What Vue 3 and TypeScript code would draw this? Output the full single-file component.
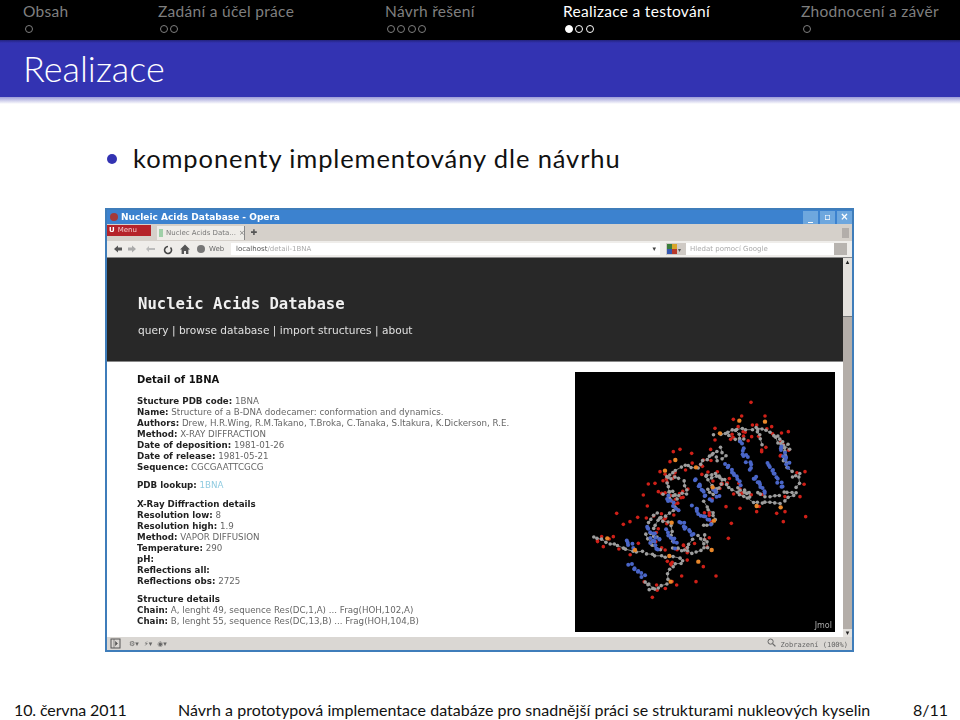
<script setup lang="ts">
const sections = [
  { name: 'Obsah', dots: 1, filled: -1, active: false },
  { name: 'Zadání a účel práce', dots: 2, filled: -1, active: false },
  { name: 'Návrh řešení', dots: 4, filled: -1, active: false },
  { name: 'Realizace a testování', dots: 3, filled: 0, active: true },
  { name: 'Zhodnocení a závěr', dots: 1, filled: -1, active: false }
]

type Row = { b: string; t?: string }
const group1: Row[] = [
  { b: 'Stucture PDB code:', t: ' 1BNA' },
  { b: 'Name:', t: ' Structure of a B-DNA dodecamer: conformation and dynamics.' },
  { b: 'Authors:', t: ' Drew, H.R.Wing, R.M.Takano, T.Broka, C.Tanaka, S.Itakura, K.Dickerson, R.E.' },
  { b: 'Method:', t: ' X-RAY DIFFRACTION' },
  { b: 'Date of deposition:', t: ' 1981-01-26' },
  { b: 'Date of release:', t: ' 1981-05-21' },
  { b: 'Sequence:', t: ' CGCGAATTCGCG' }
]
const group2: Row[] = [
  { b: 'X-Ray Diffraction details' },
  { b: 'Resolution low:', t: ' 8' },
  { b: 'Resolution high:', t: ' 1.9' },
  { b: 'Method:', t: ' VAPOR DIFFUSION' },
  { b: 'Temperature:', t: ' 290' },
  { b: 'pH:' },
  { b: 'Reflections all:' },
  { b: 'Reflections obs:', t: ' 2725' }
]
const group3: Row[] = [
  { b: 'Structure details' },
  { b: 'Chain:', t: ' A, lenght 49, sequence Res(DC,1,A) ... Frag(HOH,102,A)' },
  { b: 'Chain:', t: ' B, lenght 55, sequence Res(DC,13,B) ... Frag(HOH,104,B)' }
]

// Molecule: coordinates are read from the 3x crop, mapped to the 260x260 canvas.
let seed = 41
const rnd = () => {
  seed = (seed * 16807) % 2147483647
  return seed / 2147483647
}
const mx = (x: number) => x / 3 - 5
const my = (y: number) => y / 3 + 8

type P = [number, number]
const chains: P[][] = [
  [[435,165],[450,160],[500,150],[560,145],[620,170],[650,190],[640,240],[670,290],[690,280],[680,340],[630,370],[560,370],[500,340],[450,290],[410,290]],
  [[430,220],[380,260],[330,260],[290,290],[300,350],[320,390],[270,410],[300,440],[310,500],[380,520],[410,500],[400,450]],
  [[70,470],[120,490],[170,510],[230,520],[300,530],[340,540],[300,570],[290,610],[250,625],[230,605]],
  [[500,150],[510,190]],[[620,170],[630,200]],[[410,290],[450,350]],[[260,400],[230,440]],
  [[290,290],[340,300],[350,340],[300,350]],
  [[410,290],[440,280],[460,300],[430,340],[400,320]],
  [[270,410],[240,460],[270,480]],
  [[500,320],[540,350],[520,320]],
  [[560,340],[600,350],[640,340],[680,340]],
  [[640,240],[655,210],[625,180]],
  [[340,510],[380,470],[410,500]],
  [[400,440],[440,420],[410,380],[400,350]],
  [[430,220],[450,205],[465,225],[445,240],[430,220]],
  [[560,145],[575,180],[570,210]],
  [[480,170],[505,185],[530,170]],
  [[230,605],[240,630],[265,622]],
  [[280,340],[310,330],[330,370]],
  [[230,460],[250,500],[280,520]]
]
const rungs: [number, number, number, number][] = [
  [510,190,545,270],[630,200,660,260],[470,250,510,310],[590,250,640,320],[550,290,590,340],
  [375,300,420,360],[430,330,450,350],[290,350,320,390],[370,380,420,430],[230,440,270,480],
  [330,420,370,470],[290,450,320,500],[180,550,220,590],[170,480,190,500],[240,470,260,510]
]
const phos: P[] = [[508,122],[585,125],[450,160],[316,240],[378,262],[285,272],[428,322],[560,378],[632,382],[305,428],[432,422],[112,475],[195,510],[298,528],[385,545],[425,510],[302,605]]
const waters: P[] = [[543,67],[435,145],[330,208],[235,312],[255,310],[220,345],[232,378],[140,400],[203,412],[180,425],[160,433],[484,430],[475,475],[468,380],[510,385],[640,425],[707,410],[705,275],[378,605],[335,588],[438,588],[247,652],[585,108],[655,155],[690,350],[575,210],[515,108],[490,118],[605,140],[435,180],[365,220],[400,240],[270,275],[310,215],[300,245],[560,395],[620,400],[645,395],[575,215],[545,170],[100,500],[95,470],[130,470],[205,490],[400,560],[320,615],[275,340],[265,335]]

const gray: P[] = []
const red: P[] = waters.map((p) => [mx(p[0]), my(p[1])])
const bonds: [P, P][] = []
for (const c of chains) {
  for (let i = 0; i + 1 < c.length; i++) {
    const [a, b] = [c[i], c[i + 1]]
    const n = Math.max(1, Math.round(Math.hypot(b[0] - a[0], b[1] - a[1]) / 14))
    let prev: P | null = null
    for (let k = 0; k < n; k++) {
      const x = a[0] + ((b[0] - a[0]) * k) / n + (rnd() - 0.5) * 9
      const y = a[1] + ((b[1] - a[1]) * k) / n + (rnd() - 0.5) * 9
      const pt: P = [mx(x), my(y)]
      gray.push(pt)
      if (prev) bonds.push([prev, pt])
      prev = pt
      if (rnd() < 0.42) {
        const s = rnd() * 6.28
        red.push([mx(x + Math.cos(s) * 14), my(y + Math.sin(s) * 14)])
      }
    }
  }
}
const blue: P[] = []
for (const r of rungs) {
  const n = Math.max(3, Math.round(Math.hypot(r[2] - r[0], r[3] - r[1]) / 7))
  for (let k = 0; k <= n; k++) {
    const t = k / n
    blue.push([mx(r[0] + (r[2] - r[0]) * t + (rnd() - 0.5) * 12), my(r[1] + (r[3] - r[1]) * t + (rnd() - 0.5) * 12)])
  }
}
const orange: P[] = phos.map((p) => [mx(p[0]), my(p[1])])
</script>

<template>
  <div class="slide">
    <nav class="nav">
      <div v-for="s in sections" :key="s.name" class="sec" :class="{ active: s.active }">
        <div class="sec-name">{{ s.name }}</div>
        <div class="dots">
          <span v-for="n in s.dots" :key="n" class="dot" :class="{ full: n - 1 === s.filled }"></span>
        </div>
      </div>
    </nav>
    <header class="title"><h1>Realizace</h1></header>
    <div class="fade"></div>

    <main class="body">
      <div class="bullet-row">
        <span class="bullet"></span>
        <span class="bullet-text">komponenty implementovány dle návrhu</span>
      </div>

      <div class="win">
        <div class="win-title">
          <span class="opera-dot"></span>
          <span class="win-name">Nucleic Acids Database - Opera</span>
          <span class="win-btns">
            <span class="wb">_</span><span class="wb">▫</span><span class="wb">×</span>
          </span>
        </div>
        <div class="tabs">
          <span class="menu"><b>U</b>Menu</span>
          <span class="tab"><i class="fav"></i>Nuclec Acids Data... <em>×</em></span>
          <span class="newtab">✚</span>
          <span class="tab-end"></span>
        </div>
        <div class="toolbar">
          <span class="tb">
            <svg width="62" height="12" viewBox="0 0 62 12">
              <path d="M1 6l4-3.5v2h4v3H5v2z" fill="#555" />
              <path d="M23 6l-4-3.5v2h-4v3h4v2z" fill="#aaa" />
              <path d="M33 6l3-3v2h6v2h-6v2z" fill="#bbb" />
              <path d="M55 3.5a3.5 3.5 0 1 0 2.5 1" fill="none" stroke="#444" stroke-width="1.6" />
            </svg>
          </span>
          <svg class="home" width="12" height="12" viewBox="0 0 12 12">
            <path d="M6 1.5L1 6.5h1.6V11h2.4V8h2v3h2.4V6.5H11z" fill="#555" />
          </svg>
          <span class="globe"></span>
          <span class="web">Web</span>
          <span class="addr"><b>localhost</b>/detail-1BNA<i class="drop">▾</i></span>
          <span class="gbtn"><svg width="12" height="12" viewBox="0 0 12 12"><rect x="1" y="1" width="5" height="5" fill="#3b7d3b" /><rect x="6" y="1" width="5" height="5" fill="#d8a52a" /><rect x="1" y="6" width="5" height="5" fill="#3557b0" /><rect x="6" y="6" width="5" height="5" fill="#b8392b" /></svg><i>▾</i></span>
          <span class="search">Hledat pomocí Google</span>
          <span class="sbtn"></span>
        </div>

        <div class="view">
          <div class="page">
            <div class="dark">
              <div class="brand">Nucleic Acids Database</div>
              <div class="links">query | browse database | import structures | about</div>
            </div>
            <div class="detail">
              <div class="info">
                <h2>Detail of 1BNA</h2>
                <div class="group">
                  <div v-for="r in group1" :key="r.b"><b>{{ r.b }}</b>{{ r.t }}</div>
                </div>
                <div class="group"><b>PDB lookup:</b> <span class="link">1BNA</span></div>
                <div class="group">
                  <div v-for="r in group2" :key="r.b"><b>{{ r.b }}</b>{{ r.t }}</div>
                </div>
                <div class="group">
                  <div v-for="r in group3" :key="r.b + r.t"><b>{{ r.b }}</b>{{ r.t }}</div>
                </div>
              </div>
              <div class="jmol">
                <svg class="mol" width="260" height="260" viewBox="0 0 260 260">
                  <line v-for="(l, i) in bonds" :key="i" :x1="l[0][0]" :y1="l[0][1]" :x2="l[1][0]" :y2="l[1][1]" stroke="#8f8f8f" stroke-width="0.9" />
                  <circle v-for="(p, i) in red" :key="'r' + i" :cx="p[0]" :cy="p[1]" r="1.8" fill="#cf2018" />
                  <circle v-for="(p, i) in gray" :key="'g' + i" :cx="p[0]" :cy="p[1]" r="1.8" fill="#9e9e9e" />
                  <circle v-for="(p, i) in blue" :key="'b' + i" :cx="p[0]" :cy="p[1]" r="2" fill="#4a66c8" />
                  <circle v-for="(p, i) in orange" :key="'o' + i" :cx="p[0]" :cy="p[1]" r="2.2" fill="#e8872a" />
                </svg>
                <span class="jm">Jmol</span>
              </div>
            </div>
          </div>
          <div class="scroll">
            <span class="arrow">▴</span>
            <span class="thumb"></span>
            <span class="track"></span>
            <span class="arrow low">▾</span>
          </div>
        </div>

        <div class="status">
          <svg width="11" height="11" viewBox="0 0 11 11" class="panel"><rect x="1" y="1" width="9" height="9" fill="none" stroke="#555" /><path d="M4 1v9M5.5 3.5l2 2-2 2z" fill="#555" stroke="#555" stroke-width=".6" /></svg>
          <span class="st-ic">⚙▾</span><span class="st-ic">⚡▾</span><span class="st-ic">◉▾</span>
          <span class="zoom">
            <svg width="9" height="9" viewBox="0 0 9 9"><circle cx="3.6" cy="3.6" r="2.6" fill="none" stroke="#666" /><path d="M5.6 5.6L8.4 8.4" stroke="#666" stroke-width="1.3" /></svg>
            Zobrazení (100%)
          </span>
        </div>
      </div>
    </main>

    <footer class="foot">
      <span class="f-date">10. června 2011</span>
      <span class="f-title">Návrh a prototypová implementace databáze pro snadnější práci se strukturami nukleových kyselin</span>
      <span class="f-page">8/11</span>
    </footer>
  </div>
</template>

<style>
html, body { margin: 0; background: #fff; }
</style>

<style scoped>
.slide {
  width: 960px;
  height: 720px;
  display: flex;
  flex-direction: column;
  overflow: hidden;
  background: #fff;
  font-family: "Lato", "Open Sans", sans-serif;
}
.nav {
  height: 40px;
  background: #000;
  display: grid;
  grid-template-columns: 135px 227px 178px 238px 1fr;
  padding-left: 23px;
  box-sizing: border-box;
  color: #7f7f7f;
}
.sec-name {
  font-size: 15.5px;
  line-height: 16px;
  padding-top: 3px;
  letter-spacing: 0.3px;
  white-space: nowrap;
}
.sec.active { color: #fff; }
.dots { display: flex; margin-top: 6px; margin-left: 2px; }
.dot {
  width: 8px;
  height: 8px;
  box-sizing: border-box;
  border: 1px solid currentColor;
  border-radius: 50%;
  margin-right: 2.3px;
}
.dot.full { background: currentColor; }
.title {
  height: 57px;
  background: #3333b2;
  background-image: linear-gradient(#23237e 0, #3333b2 3px);
  display: flex;
  align-items: center;
  padding-left: 23px;
}
h1 {
  margin: 0;
  font-size: 36px;
  font-weight: 300;
  color: #fff;
  line-height: 57px;
}
.fade { height: 7px; background: linear-gradient(#9c9cd8, #fff); }
.body { flex: 1; display: flex; flex-direction: column; padding-left: 105px; }
.bullet-row { display: flex; align-items: center; height: 30px; margin-top: 40px; }
.bullet {
  width: 10px;
  height: 10px;
  border-radius: 50%;
  background: #3333b2;
  margin-left: 2px;
  margin-right: 16px;
}
.bullet-text {
  font-size: 25.5px;
  letter-spacing: 0.9px;
  color: #111;
  white-space: nowrap;
  padding-bottom: 3px;
}
.win {
  margin-top: 34px;
  width: 749px;
  height: 444px;
  box-sizing: border-box;
  border: 2px solid #3f7dba;
  display: flex;
  flex-direction: column;
  font-family: "DejaVu Sans", sans-serif;
  filter: blur(0.6px);
}
.win-title {
  height: 14px;
  flex: none;
  background: #3c82cf;
  display: flex;
  align-items: center;
  color: #fff;
  font-size: 9px;
  font-weight: 700;
  padding-left: 3px;
}
.opera-dot { width: 8px; height: 8px; border-radius: 50%; background: #a53a3a; margin-right: 3px; }
.win-btns { margin-left: auto; display: flex; }
.wb {
  width: 15px;
  height: 13px;
  margin-left: 2px;
  background: #6ea7de;
  color: #fff;
  text-align: center;
  font-size: 10px;
  line-height: 12px;
}
.tabs {
  height: 17px;
  flex: none;
  background: #d5d0ca;
  display: flex;
  align-items: center;
  font-size: 7px;
  color: #777;
}
.menu {
  width: 44px;
  height: 11px;
  background: #b5232a;
  color: #f3caca;
  font-size: 7px;
  line-height: 11px;
  margin-top: -4px;
  box-sizing: border-box;
  padding-left: 2px;
}
.menu b { color: #fff; margin-right: 3px; }
.tab {
  margin-left: 6px;
  width: 88px;
  height: 14px;
  box-sizing: border-box;
  padding-left: 2px;
  display: flex;
  align-items: center;
  background: #eeece8;
  border-right: 1px solid #888;
  white-space: nowrap;
}
.tab em { font-style: normal; margin-left: 3px; }
.fav { width: 4px; height: 8px; background: #9fd0a8; margin-right: 3px; flex: none; }
.newtab { width: 18px; text-align: center; color: #555; font-size: 8px; }
.tab-end { flex: 1; }
.tabs::after {
  content: "";
  width: 7px;
  height: 10px;
  background: #b3aeaa;
  margin-right: 3px;
}
.toolbar {
  height: 17px;
  flex: none;
  box-sizing: border-box;
  background: #efedea;
  border-bottom: 1px solid #888;
  display: flex;
  align-items: center;
  font-size: 7px;
  color: #888;
  padding-left: 6px;
}
.tb { display: flex; }
.home { margin-left: 4px; }
.globe { width: 8px; height: 8px; background: #777; border-radius: 50%; margin-left: 6px; }
.web { margin-left: 4px; width: 22px; color: #666; }
.addr {
  width: 246px;
  flex: none;
  height: 12px;
  background: #fff;
  box-sizing: border-box;
  padding-left: 5px;
  line-height: 12px;
  white-space: nowrap;
  flex-grow: 1;
  position: relative;
  color: #aaa;
}
.addr b { color: #555; font-weight: 400; }
.drop { position: absolute; right: 4px; top: 0; font-style: normal; color: #444; }
.gbtn { display: flex; align-items: center; width: 20px; margin-left: 6px; background: #cfcac5; height: 12px; }
.gbtn i { font-style: normal; font-size: 6px; color: #555; }
.search {
  width: 148px;
  flex: none;
  height: 12px;
  line-height: 12px;
  background: #fff;
  color: #aaa;
  padding-left: 4px;
  box-sizing: border-box;
}
.sbtn { width: 13px; height: 12px; background: #b8b4b0; margin-right: 5px; flex: none; }
.view { flex: 1; display: flex; min-height: 0; }
.page { width: 736px; background: #fff; display: flex; flex-direction: column; }
.dark {
  height: 104px;
  box-sizing: border-box;
  background: #282828;
  border-bottom: 1px solid #888;
  padding-left: 31px;
  color: #f0f0f0;
}
.brand {
  font-family: "DejaVu Sans Mono", monospace;
  font-weight: 700;
  font-size: 15.6px;
  line-height: 18px;
  padding-top: 37px;
}
.links { font-size: 10.6px; line-height: 14px; margin-top: 10px; color: #e0e0e0; }
.detail { flex: 1; display: flex; justify-content: space-between; min-height: 0; padding: 10px 8px 0 30px; }
.info { font-size: 8.7px; line-height: 11px; color: #666; }
.info b { color: #222; font-weight: 700; }
.info h2 { margin: 1px 0 10px; font-size: 10px; line-height: 13px; color: #111; font-weight: 700; }
.group { margin-bottom: 7px; white-space: nowrap; }
.group:nth-of-type(2) { margin-bottom: 8px; }
.link { color: #8fcbe0; }
.jmol { width: 260px; height: 260px; background: #000; position: relative; flex: none; }
.mol { display: block; filter: blur(0.35px); }
.jm { position: absolute; right: 3px; bottom: 2px; font-size: 8px; color: #aaa; }
.scroll {
  flex: 1;
  display: flex;
  flex-direction: column;
  background: #b4aea9;
}
.thumb { height: 50px; background: #e4e1dd; border-bottom: 1px solid #777; flex: none; }
.track { flex: 1; }
.arrow { height: 8px; font-size: 7px; line-height: 8px; text-align: center; background: #e4e1dd; color: #222; flex: none; }
.status {
  height: 13px;
  flex: none;
  background: #dad7d3;
  display: flex;
  align-items: center;
  font-size: 7px;
  color: #666;
  padding-left: 3px;
}
.panel { margin-right: 8px; }
.st-ic { margin-right: 5px; }
.zoom { margin-left: auto; margin-right: 4px; font-family: "DejaVu Sans Mono", monospace; }
.foot {
  height: 40px;
  display: flex;
  align-items: center;
  padding-top: 18px;
  box-sizing: border-box;
  font-size: 16px;
  color: #111;
  white-space: nowrap;
}
.f-date { margin-left: 14px; width: 164px; flex: none; letter-spacing: -0.12px; }
.f-title { width: 735px; flex: none; letter-spacing: 0.03px; }
.f-page { flex: none; }
</style>
